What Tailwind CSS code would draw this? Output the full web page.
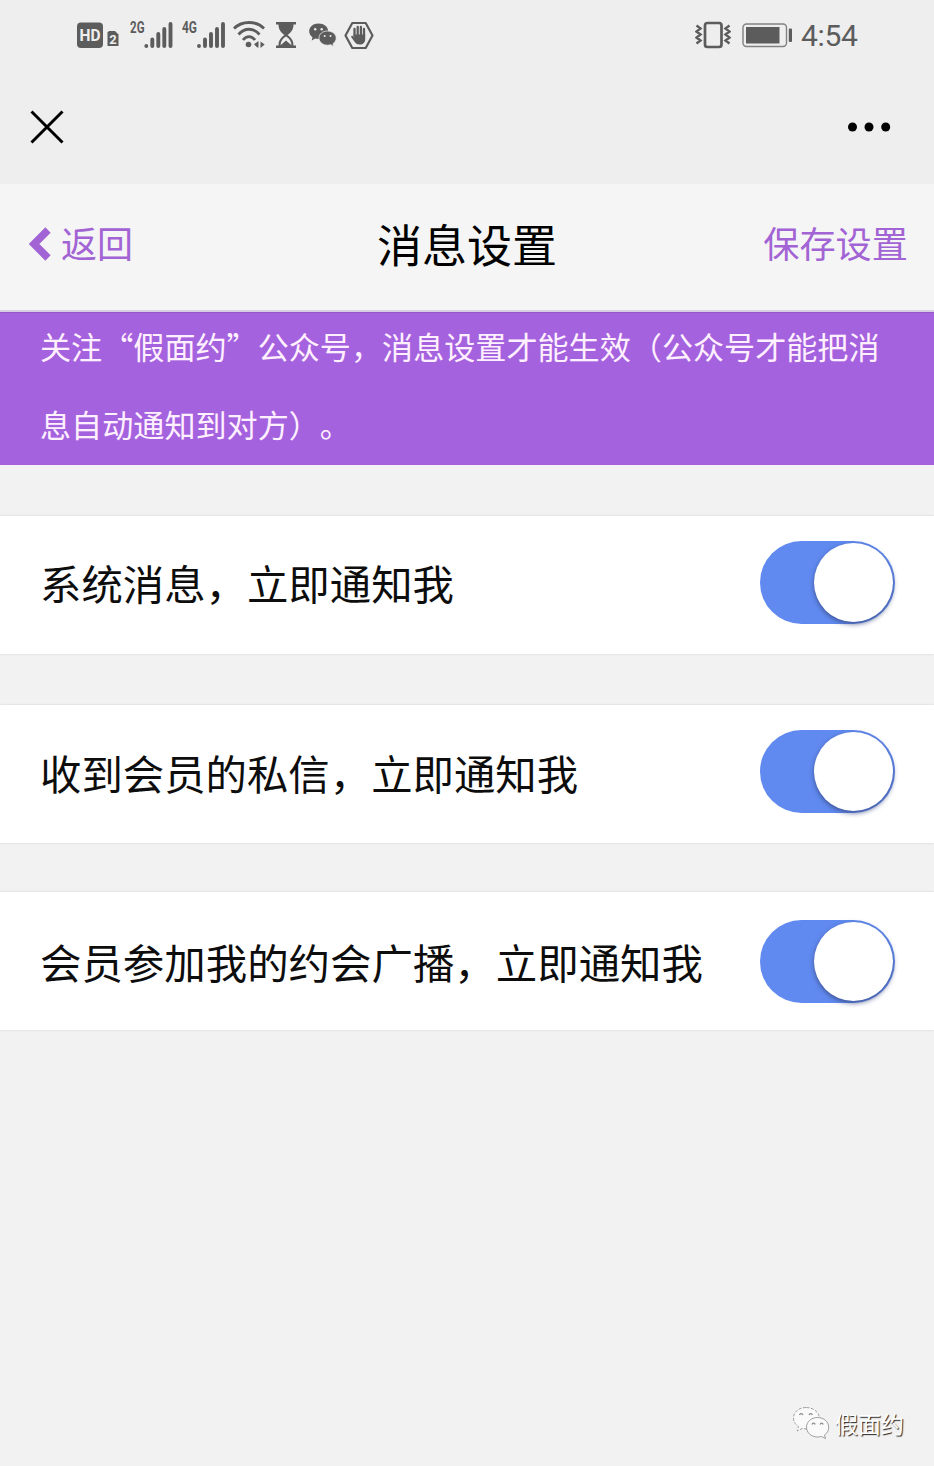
<!DOCTYPE html>
<html lang="zh-CN">
<head>
    <meta charset="UTF-8">
    <meta name="viewport" content="width=device-width, initial-scale=1.0">
    <title>消息设置</title>
    <script src="https://cdn.jsdelivr.net/npm/@tailwindcss/browser@4"></script>
</head>
<body class="relative bg-[#f2f2f2] text-[#0d0d0d] min-h-screen overflow-hidden font-['Noto_Sans_CJK_SC',sans-serif] [text-spacing-trim:space-all]">
    <!-- Status Bar -->
    <div class="h-[70px] bg-[#eeeeee] pl-[77px] pr-[77px] flex justify-between items-start text-[#5c5c5c]">
        <div class="flex pt-[18px]">
            <svg class="w-[42px] h-9" viewBox="0 0 42 36" fill="currentColor">
                <rect x="0" y="4.500" width="26" height="25.500" rx="4"/>
                <text x="13" y="23" text-anchor="middle" textLength="21" lengthAdjust="spacingAndGlyphs" font-family="Roboto" font-weight="700" font-size="16" fill="#eeeeee">HD</text>
                <path d="M32 13h6l3.500 3.500V28h-11V14.500z"/>
                <text x="36" y="25.500" text-anchor="middle" font-family="Roboto" font-weight="700" font-size="13" fill="#eeeeee">2</text>
            </svg>
            <svg class="w-11 h-9 ml-[10px]" viewBox="0 0 44 36" fill="currentColor">
                <text x="1" y="15" textLength="14.500" lengthAdjust="spacingAndGlyphs" font-family="Roboto" font-weight="700" font-size="16.500">2G</text>
                <path d="M17.300 28v.1M23.300 21.500v6.600M29.300 16v12.100M35.300 11v17.100M41.500 6v22.100" fill="none" stroke="currentColor" stroke-width="3.900" stroke-linecap="round"/>
            </svg>
            <svg class="w-11 h-9 ml-2" viewBox="0 0 44 36" fill="currentColor">
                <text x="1" y="15" textLength="15" lengthAdjust="spacingAndGlyphs" font-family="Roboto" font-weight="700" font-size="16.500">4G</text>
                <path d="M18 28v.1M24 21.500v6.600M30 16v12.100M36 11v17.100M42 6v22.100" fill="none" stroke="currentColor" stroke-width="3.900" stroke-linecap="round"/>
            </svg>
            <svg class="w-8 h-9 ml-2" viewBox="0 0 32 36" fill="none" stroke="currentColor" stroke-width="2.800">
                <path d="M1 10.500C9 2.500 23 2.500 31 10.500M5.500 16.500C11.500 9.500 20.500 9.500 26.500 16.500M10 22c3.500-4.500 8.500-4.500 12 0"/>
                <circle cx="15.500" cy="26.500" r="2.800" fill="currentColor" stroke="none"/>
                <path d="M25.500 23v6.500h-1.200l-3.300-3.300zM27.500 23.500v6.500l4.200-3.500z" fill="currentColor" stroke="none"/>
            </svg>
            <svg class="w-[22px] h-9 ml-[10px]" viewBox="0 0 22 36" fill="currentColor">
                <path d="M1 4h20v2.500h-2.500C18.500 12 15.500 15 12.500 17c3 2 6 5 6 10.500H21V30H1v-2.500h2.500C3.500 22 6.500 19 9.500 17c-3-2-6-5-6-10.500H1z"/>
                <path d="M11 18.500c-3.200 1.800-5.300 4.800-5.500 8.700l5.500-4.700 5.500 4.700c-.2-3.900-2.300-6.900-5.500-8.700z" fill="#eeeeee"/>
            </svg>
            <svg class="w-[28px] h-9 ml-3" viewBox="0 0 28 36" fill="currentColor">
                <path d="M9.500 5.500C4 5.500.2 9 .2 13.200c0 2.500 1.300 4.500 3.300 6L2.700 22.500l3.500-2c1 .3 2.200.5 3.300.5 5.500 0 9.700-3.500 9.700-7.800S15 5.500 9.500 5.500z"/>
                <path d="M18.500 13c-4.800 0-8.500 3-8.500 7s3.700 7.200 8.500 7.200c1.100 0 2.200-.2 3.100-.5l3 1.700-.6-2.700c2-1.400 3.200-3.400 3.200-5.700 0-4-3.900-7-8.700-7z" stroke="#eeeeee" stroke-width=".8"/>
                <g fill="#eeeeee"><circle cx="6.200" cy="11.200" r="1.200"/><circle cx="12.700" cy="11.200" r="1.200"/><circle cx="15.700" cy="18" r="1"/><circle cx="21.500" cy="18" r="1"/></g>
            </svg>
            <svg class="w-[30px] h-9 ml-[7px]" viewBox="0 0 30 36" fill="none" stroke="currentColor">
                <path d="M8.300 5h13.400L28.500 17.500 21.700 30H8.300L1.500 17.500z" stroke-width="2.200" stroke-linejoin="round"/>
                <path d="M10.500 18V11M13.700 17V9M16.900 17V9M20 18V11" stroke-width="2.300" stroke-linecap="round"/>
                <path d="M9.400 16.500h11.800V21c0 3.500-2 5.500-5.500 5.500-2.500 0-3.700-.8-5-2.500L7.300 19.300c-.6-1.300.9-2 1.600-1.200l1.500 1.500z" fill="currentColor" stroke="none"/>
            </svg>
        </div>
        <div class="flex pt-[18px]">
            <svg class="w-9 h-9" viewBox="0 0 36 36" fill="none" stroke="currentColor">
                <rect x="10" y="5" width="16.500" height="24" rx="2.500" stroke-width="2.700"/>
                <path d="M1.500 7.500l4 3-4 3 4 3-4 3 4 3-4 3M34.500 7.500l-4 3 4 3-4 3 4 3-4 3 4 3" stroke-width="2.400"/>
            </svg>
            <svg class="w-[51px] h-9 ml-[10px]" viewBox="0 0 51 36" fill="currentColor">
                <rect x="2" y="6" width="43.500" height="22.500" rx="3.500" fill="none" stroke="currentColor" stroke-width="1.400" opacity=".75"/>
                <rect x="5" y="9" width="33.500" height="16.500"/>
                <rect x="47.800" y="10.500" width="3.200" height="13.500" rx="1"/>
            </svg>
            <span class="ml-[9px] text-[30px] leading-9 font-[Roboto] w-14 whitespace-nowrap tracking-[-0.3px]">4:54</span>
        </div>
    </div>

    <!-- Browser Bar -->
    <div class="h-[114px] bg-[#eeeeee] pl-[30px] pr-[43px] flex justify-between items-start text-black">
        <svg class="w-[34px] h-[34px] mt-10" viewBox="0 0 34 34" fill="none" stroke="currentColor" stroke-width="3">
            <path d="M1.500 1.500l31 31M32.500 1.500l-31 31"/>
        </svg>
        <svg class="w-[44px] h-[10px] mt-[52px]" viewBox="0 0 44 10" fill="currentColor">
            <circle cx="5.500" cy="5" r="4.500"/><circle cx="22" cy="5" r="4.500"/><circle cx="38.700" cy="5" r="4.500"/>
        </svg>
    </div>

    <!-- Header -->
    <header class="h-32 bg-[#f5f5f5] pl-[27px] pr-[26px] pb-[6px] grid grid-cols-3 items-center border-b-2 border-[#d9cde4]">
        <a href="#" class="flex items-center text-[36px] leading-[44px] text-[#a264d4]">
            <svg class="w-[22px] h-[34px] ml-[2px] mr-[10px]" viewBox="0 0 22 34" fill="none" stroke="currentColor" stroke-width="7.500">
                <path d="M19 3L5 17 19 31"/>
            </svg><span class="-mt-[4px]">返回</span>
        </a>
        <h1 class="text-[45px] leading-[56px] -ml-[1px] text-center text-black">消息设置</h1>
        <a href="#" class="text-[36.200px] leading-[44px] -mt-[4px] text-right text-[#a264d4]">保存设置</a>
    </header>

    <!-- Notice -->
    <div class="h-[153px] bg-[#a562de] pl-[40px] pb-[2px] flex items-end border-t border-[#9458c4]">
        <p class="text-[31.1px] leading-[78px] text-[#fff0ff] whitespace-nowrap">关注“假面约”公众号，消息设置才能生效（公众号才能把消<br>息自动通知到对方）。</p>
    </div>

    <!-- Settings -->
    <main class="pt-[51px] flex flex-col gap-[51px]">
        <div class="h-[138px] bg-white pl-10 pr-[39px] flex justify-between items-center shadow-[0_0_2px_#cccccc]">
            <span class="text-[41.4px] mb-[6px]">系统消息，立即通知我</span>
            <div class="w-[135px] h-[83px] mb-[6px] p-[2px] rounded-full bg-[#618af0] flex justify-end">
                <div class="w-[79px] h-[79px] rounded-full bg-white shadow-[0_2px_5px_#34457ccc]"></div>
            </div>
        </div>
        <div class="h-[138px] bg-white pl-10 pr-[39px] flex justify-between items-center shadow-[0_0_2px_#cccccc]">
            <span class="text-[41.4px] mb-1">收到会员的私信，立即通知我</span>
            <div class="w-[135px] h-[83px] mb-[6px] p-[2px] rounded-full bg-[#618af0] flex justify-end">
                <div class="w-[79px] h-[79px] rounded-full bg-white shadow-[0_2px_5px_#34457ccc]"></div>
            </div>
        </div>
        <div class="h-[138px] -mt-[2px] bg-white pl-10 pr-[39px] flex justify-between items-center shadow-[0_0_2px_#cccccc]">
            <span class="text-[41.45px]">会员参加我的约会广播，立即通知我</span>
            <div class="w-[135px] h-[83px] p-[2px] rounded-full bg-[#618af0] flex justify-end">
                <div class="w-[79px] h-[79px] rounded-full bg-white shadow-[0_2px_5px_#34457ccc]"></div>
            </div>
        </div>
    </main>

    <!-- Watermark -->
    <div class="absolute right-[30px] bottom-[26px] flex items-center">
        <svg class="w-[38px] h-[34px] mr-[5px]" viewBox="0 0 38 34" fill="#fafafa" stroke="#888888" stroke-width=".8">
            <path d="M14 1.500C7 1.500 1.500 6 1.500 12c0 4 2 6.500 5 8.500L5.200 25l5-2.500c6 1.500 17-1 17-10.500C27.200 6 21 1.500 14 1.500z" stroke-dasharray="3 1.500"/>
            <path d="M25.500 11.500c-6.200 0-11 4.300-11 9.700s4.800 9.800 11 9.800c1.500 0 2.800-.2 4-.6l4 2.200-1-3.500c2.600-1.900 4.200-4.600 4.200-7.900 0-5.400-5-9.700-11.200-9.700z"/>
            <path d="M7.500 9c.6-1.800 2.800-1.800 3.400 0M17 9c.6-1.800 2.800-1.800 3.400 0M20 18.500c.6-1.800 2.600-1.800 3.200 0M28 18.500c.6-1.800 2.600-1.800 3.200 0" fill="none" stroke-width="1.200"/>
        </svg>
        <span class="text-[23px] leading-[34px] text-white [text-shadow:1px_1px_1px_#222222]">假面约</span>
    </div>
</body>
</html>
